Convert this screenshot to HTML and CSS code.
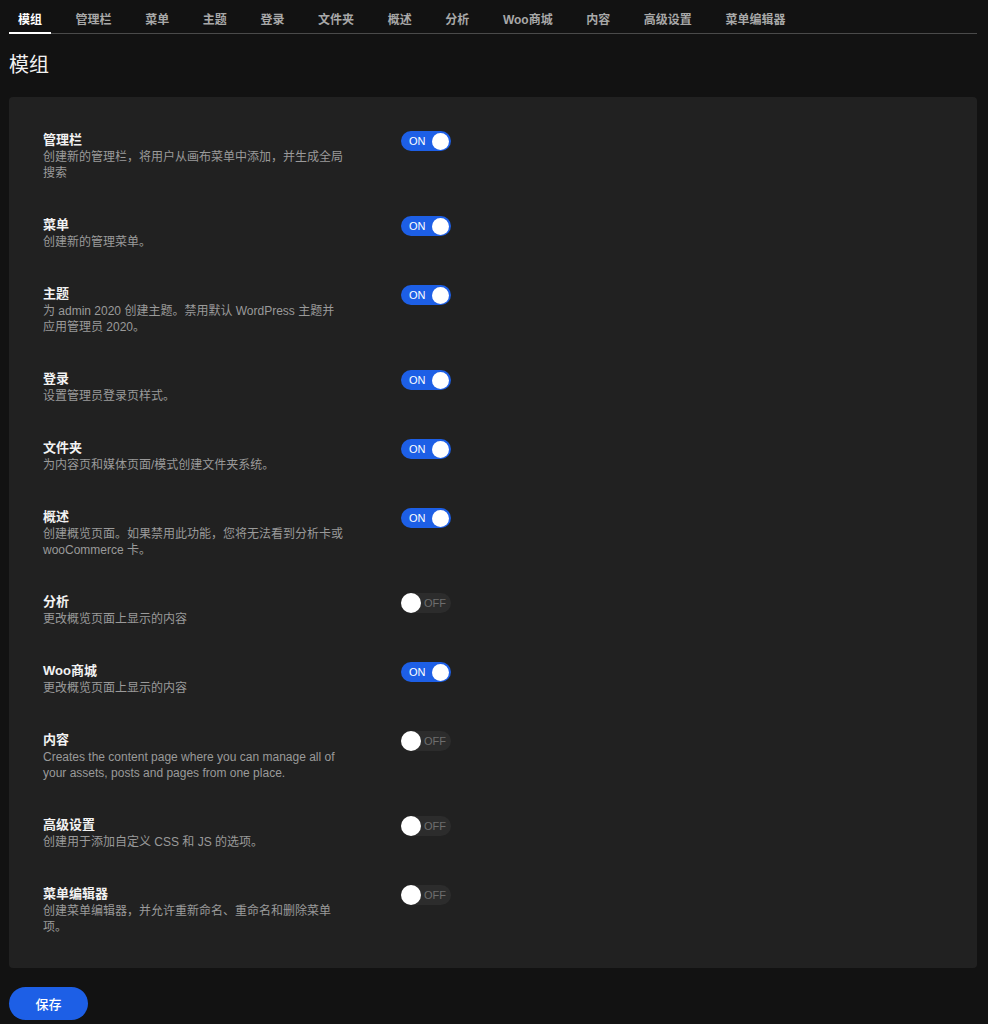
FILE: index.html
```html
<!DOCTYPE html>
<html lang="zh-CN">
<head>
<meta charset="utf-8">
<title>模组</title>
<link rel="stylesheet" href="styles.css">
</head>
<body>
<div class="page">
  <nav class="tabs">
    <a class="tab active">模组</a>
    <a class="tab">管理栏</a>
    <a class="tab">菜单</a>
    <a class="tab">主题</a>
    <a class="tab">登录</a>
    <a class="tab">文件夹</a>
    <a class="tab">概述</a>
    <a class="tab">分析</a>
    <a class="tab">Woo商城</a>
    <a class="tab">内容</a>
    <a class="tab">高级设置</a>
    <a class="tab">菜单编辑器</a>
  </nav>

  <h1 class="page-title">模组</h1>

  <section class="panel">
    <div class="module">
      <div class="module-text">
        <div class="module-name">管理栏</div>
        <div class="module-desc">创建新的管理栏，将用户从画布菜单中添加，并生成全局搜索</div>
      </div>
      <span class="switch on"><span class="switch-label">ON</span><span class="knob"></span></span>
    </div>
    <div class="module">
      <div class="module-text">
        <div class="module-name">菜单</div>
        <div class="module-desc">创建新的管理菜单。</div>
      </div>
      <span class="switch on"><span class="switch-label">ON</span><span class="knob"></span></span>
    </div>
    <div class="module">
      <div class="module-text">
        <div class="module-name">主题</div>
        <div class="module-desc">为 admin 2020 创建主题。禁用默认 WordPress 主题并应用管理员 2020。</div>
      </div>
      <span class="switch on"><span class="switch-label">ON</span><span class="knob"></span></span>
    </div>
    <div class="module">
      <div class="module-text">
        <div class="module-name">登录</div>
        <div class="module-desc">设置管理员登录页样式。</div>
      </div>
      <span class="switch on"><span class="switch-label">ON</span><span class="knob"></span></span>
    </div>
    <div class="module">
      <div class="module-text">
        <div class="module-name">文件夹</div>
        <div class="module-desc">为内容页和媒体页面/模式创建文件夹系统。</div>
      </div>
      <span class="switch on"><span class="switch-label">ON</span><span class="knob"></span></span>
    </div>
    <div class="module">
      <div class="module-text">
        <div class="module-name">概述</div>
        <div class="module-desc">创建概览页面。如果禁用此功能，您将无法看到分析卡或 wooCommerce 卡。</div>
      </div>
      <span class="switch on"><span class="switch-label">ON</span><span class="knob"></span></span>
    </div>
    <div class="module">
      <div class="module-text">
        <div class="module-name">分析</div>
        <div class="module-desc">更改概览页面上显示的内容</div>
      </div>
      <span class="switch off"><span class="knob"></span><span class="switch-label">OFF</span></span>
    </div>
    <div class="module">
      <div class="module-text">
        <div class="module-name">Woo商城</div>
        <div class="module-desc">更改概览页面上显示的内容</div>
      </div>
      <span class="switch on"><span class="switch-label">ON</span><span class="knob"></span></span>
    </div>
    <div class="module">
      <div class="module-text">
        <div class="module-name">内容</div>
        <div class="module-desc">Creates the content page where you can manage all of your assets, posts and pages from one place.</div>
      </div>
      <span class="switch off"><span class="knob"></span><span class="switch-label">OFF</span></span>
    </div>
    <div class="module">
      <div class="module-text">
        <div class="module-name">高级设置</div>
        <div class="module-desc">创建用于添加自定义 CSS 和 JS 的选项。</div>
      </div>
      <span class="switch off"><span class="knob"></span><span class="switch-label">OFF</span></span>
    </div>
    <div class="module">
      <div class="module-text">
        <div class="module-name">菜单编辑器</div>
        <div class="module-desc">创建菜单编辑器，并允许重新命名、重命名和删除菜单项。</div>
      </div>
      <span class="switch off"><span class="knob"></span><span class="switch-label">OFF</span></span>
    </div>
  </section>

  <button class="save-btn" type="button">保存</button>
</div>
</body>
</html>
```

FILE: styles.css
```css
* {
  box-sizing: border-box;
}

html,
body {
  margin: 0;
  background: #121212;
}

body {
  font-family: "Liberation Sans", "Noto Sans CJK SC", sans-serif;
  color: #eeeeee;
}

.page {
  padding: 0 11px 0 9px;
}

/* top tab bar */
.tabs {
  display: flex;
  gap: 15.6px;
  border-bottom: 1px solid #4a4a4a;
}

.tab {
  display: block;
  padding: 12px 9px 4px;
  margin-bottom: -1px;
  font-size: 12px;
  line-height: 16px;
  font-weight: 700;
  color: #a8a8a8;
  border-bottom: 2px solid transparent;
  cursor: pointer;
}

.tab.active {
  color: #ffffff;
  border-bottom-color: #ffffff;
}

.page-title {
  margin: 17px 0 18px;
  font-size: 20px;
  line-height: 28px;
  font-weight: 400;
  color: #f2f2f2;
}

/* module list */
.panel {
  background: #212121;
  border-radius: 4px;
  padding: 34px 34px 33px;
  display: flex;
  flex-direction: column;
  gap: 35px;
}

.module {
  display: grid;
  grid-template-columns: 301px 50px;
  column-gap: 57px;
  align-items: start;
}

.module-name {
  font-size: 13px;
  line-height: 18px;
  font-weight: 700;
  color: #f2f2f2;
}

.module-desc {
  font-size: 12px;
  line-height: 16px;
  color: #9a9a9a;
}

/* toggle switch */
.switch {
  display: flex;
  align-items: center;
  width: 50px;
  height: 20px;
  border-radius: 10px;
  font-size: 11px;
  line-height: 1;
}

.switch .knob {
  border-radius: 50%;
  background: #ffffff;
  flex: none;
}

.switch.on {
  background: #1d5fe6;
  padding: 0 2px 0 8px;
  justify-content: space-between;
}

.switch.on .switch-label {
  color: #ffffff;
}

.switch.on .knob {
  width: 17px;
  height: 17px;
}

.switch.off {
  background: #2c2c2c;
  gap: 3px;
}

.switch.off .knob {
  width: 20px;
  height: 20px;
}

.switch.off .switch-label {
  color: #6e6e6e;
}

.save-btn {
  display: block;
  margin-top: 19px;
  width: 79px;
  height: 33px;
  border: 0;
  border-radius: 17px;
  background: #1d5fe6;
  color: #ffffff;
  font-family: "Liberation Sans", "Noto Sans CJK SC", sans-serif;
  font-size: 13px;
  font-weight: 500;
  cursor: pointer;
}
```
